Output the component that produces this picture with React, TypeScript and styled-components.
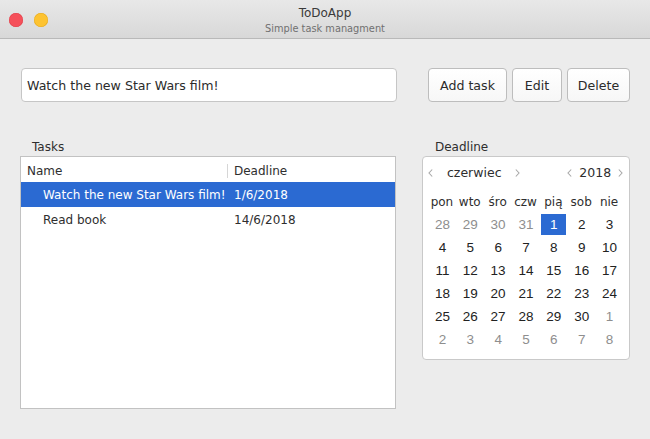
import React, { FC } from 'react';
import styled, { createGlobalStyle, css } from 'styled-components';

const GlobalStyle = createGlobalStyle`
  html, body {
    margin:0;
    padding:0;
    background:#ececec;
  }
  body {
    font-family:"DejaVu Sans", sans-serif;
    color:#2e2e2e;
  }
`;

const Window = styled.div`
  width:650px;
  height:439px;
  background:#ececec;
  overflow:hidden;
`;

const TitleBar = styled.header`
  position:relative;
  height:38px;
  border-bottom:1px solid #b9b9b9;
  background:linear-gradient(#e8e8e8, #d8d8d8);
  display:flex;
  flex-direction:column;
  align-items:center;
  .title {
    margin-top:5px;
    font-size:12px;
    line-height:16px;
    color:#3a3a3a;
  }
  .subtitle {
    margin-top:1px;
    font-size:9.8px;
    line-height:14px;
    color:#707070;
  }
`;

const Lights = styled.div`
  position:absolute;
  left:9px;
  top:13px;
  display:flex;
  gap:11px;
`;

const Light = styled.span<{ $color: string; $edge: string }>`
  width:14px;
  height:14px;
  border-radius:50%;
  background:${p => p.$color};
  box-shadow:inset 0 0 0 0.5px ${p => p.$edge};
`;

const Content = styled.main`
  padding:29px 0 0 21px;
`;

const Toolbar = styled.div`
  display:flex;
  align-items:center;
  height:34px;
`;

const TaskInput = styled.input`
  box-sizing:border-box;
  width:376px;
  height:34px;
  margin:0 31px 0 0;
  padding:0 5px;
  border:1px solid #c6c6c6;
  border-radius:4px;
  background:#fff;
  font-family:"DejaVu Sans", sans-serif;
  font-size:12.6px;
  color:#2b2b2b;
  outline:none;
`;

const Button = styled.button<{ $width: number }>`
  box-sizing:border-box;
  width:${p => p.$width}px;
  height:34px;
  margin-right:5px;
  padding:0;
  border:1px solid #bdbdbd;
  border-radius:4px;
  background:linear-gradient(#ffffff, #f7f7f7);
  font-family:"DejaVu Sans", sans-serif;
  font-size:12.6px;
  color:#2b2b2b;
`;

const Panels = styled.div`
  display:flex;
  margin-top:37px;
  margin-left:-1px;
`;

const Panel = styled.section<{ $width: number; $gap?: number }>`
  width:${p => p.$width}px;
  margin-right:${p => p.$gap || 0}px;
`;

const PanelLabel = styled.div<{ $indent: number }>`
  height:17px;
  padding-left:${p => p.$indent}px;
  font-size:12px;
  line-height:16px;
  color:#2e2e2e;
`;

const Table = styled.div`
  box-sizing:border-box;
  height:253px;
  border:1px solid #c2c2c2;
  background:#fff;
`;

const Row = styled.div<{ $selected?: boolean; $header?: boolean }>`
  display:grid;
  grid-template-columns:207px 1fr;
  height:25px;
  align-items:center;
  font-size:12px;
  color:#2e2e2e;
  ${p => p.$header && css`
    padding-top:2px;
    box-sizing:border-box;
  `}
  ${p => p.$selected && css`
    background:#2b6ad2;
    color:#fff;
  `}
`;

const Cell = styled.div<{ $indent: number; $divider?: boolean }>`
  position:relative;
  padding-left:${p => p.$indent}px;
  white-space:nowrap;
  overflow:hidden;
  ${p => p.$divider && css`
    &:after {
      content:'';
      position:absolute;
      right:0;
      top:-2px;
      bottom:-2px;
      width:1px;
      background:#d6d6d6;
    }
  `}
`;

const Calendar = styled.div`
  box-sizing:border-box;
  height:204px;
  border:1px solid #c9c9c9;
  border-radius:4px;
  background:#fff;
  padding:0 4px 0 5px;
`;

const Nav = styled.div`
  display:flex;
  align-items:center;
  height:31px;
  font-size:12.5px;
  color:#2e2e2e;
`;

const NavGroup = styled.div<{ $width: number }>`
  display:flex;
  align-items:center;
  width:${p => p.$width}px;
`;

const NavText = styled.span<{ $left: number; $right: number }>`
  margin:0 ${p => p.$right}px 0 ${p => p.$left}px;
`;

const Grid = styled.div`
  display:grid;
  grid-template-columns:repeat(7, 1fr);
  width:195px;
`;

const WeekDay = styled.div`
  height:22px;
  margin-top:3px;
  display:flex;
  align-items:center;
  justify-content:center;
  font-size:12px;
  color:#2e2e2e;
`;

const Day = styled.div<{ $muted?: boolean; $selected?: boolean }>`
  height:21px;
  margin:1px 1px 1px 2px;
  display:flex;
  align-items:center;
  justify-content:center;
  font-family:"Liberation Sans", Arial, sans-serif;
  font-size:13.5px;
  color:${p => (p.$muted ? '#8e8e8e' : '#222')};
  ${p => p.$selected && css`
    background:#2b6ad2;
    color:#fff;
  `}
`;

const Chevron: FC<{ dir: 'left' | 'right' }> = ({ dir }) => (
  <svg width="5" height="8" viewBox="0 0 5 8">
    <path
      d={dir === 'left' ? 'M4.2 0.5 L1 4 L4.2 7.5' : 'M0.8 0.5 L4 4 L0.8 7.5'}
      fill="none"
      stroke="#a8a8a8"
      strokeWidth="1.1"
    />
  </svg>
);

interface ITask {
  name: string;
  deadline: string;
}

const tasks: ITask[] = [
  { name: 'Watch the new Star Wars film!', deadline: '1/6/2018' },
  { name: 'Read book', deadline: '14/6/2018' },
];

const weekDays = ['pon', 'wto', 'śro', 'czw', 'pią', 'sob', 'nie'];

// June 2018 starts on Friday, grid shows 6 weeks from Mon 28 May
const days = Array.from({ length: 42 }, (_, i) => {
  if (i < 4) return { n: 28 + i, muted: true };
  if (i < 34) return { n: i - 3, muted: false };
  return { n: i - 33, muted: true };
});

const App: FC = () => (
  <Window>
    <GlobalStyle />
    <TitleBar>
      <Lights>
        <Light $color="#f5505a" $edge="#e0424c" />
        <Light $color="#fdc331" $edge="#e6aa20" />
      </Lights>
      <span className='title'>ToDoApp</span>
      <span className='subtitle'>Simple task managment</span>
    </TitleBar>
    <Content>
      <Toolbar>
        <TaskInput defaultValue="Watch the new Star Wars film!" />
        <Button $width={79}>Add task</Button>
        <Button $width={50}>Edit</Button>
        <Button $width={63}>Delete</Button>
      </Toolbar>
      <Panels>
        <Panel $width={376} $gap={26}>
          <PanelLabel $indent={12}>Tasks</PanelLabel>
          <Table>
            <Row $header>
              <Cell $indent={6} $divider>Name</Cell>
              <Cell $indent={6}>Deadline</Cell>
            </Row>
            {tasks.map((task, i) => (
              <Row key={`task-${task.name}`} $selected={i === 0}>
                <Cell $indent={22}>{task.name}</Cell>
                <Cell $indent={6}>{task.deadline}</Cell>
              </Row>
            ))}
          </Table>
        </Panel>
        <Panel $width={208}>
          <PanelLabel $indent={13}>Deadline</PanelLabel>
          <Calendar>
            <Nav>
              <NavGroup $width={140}>
                <Chevron dir="left" />
                <NavText $left={14} $right={13}>czerwiec</NavText>
                <Chevron dir="right" />
              </NavGroup>
              <NavGroup $width={58}>
                <Chevron dir="left" />
                <NavText $left={7} $right={7}>2018</NavText>
                <Chevron dir="right" />
              </NavGroup>
            </Nav>
            <Grid>
              {weekDays.map(d => (
                <WeekDay key={`wd-${d}`}>{d}</WeekDay>
              ))}
              {days.map((d, i) => (
                <Day key={`day-${i}`} $muted={d.muted} $selected={i === 4}>
                  {d.n}
                </Day>
              ))}
            </Grid>
          </Calendar>
        </Panel>
      </Panels>
    </Content>
  </Window>
);

export default App;
